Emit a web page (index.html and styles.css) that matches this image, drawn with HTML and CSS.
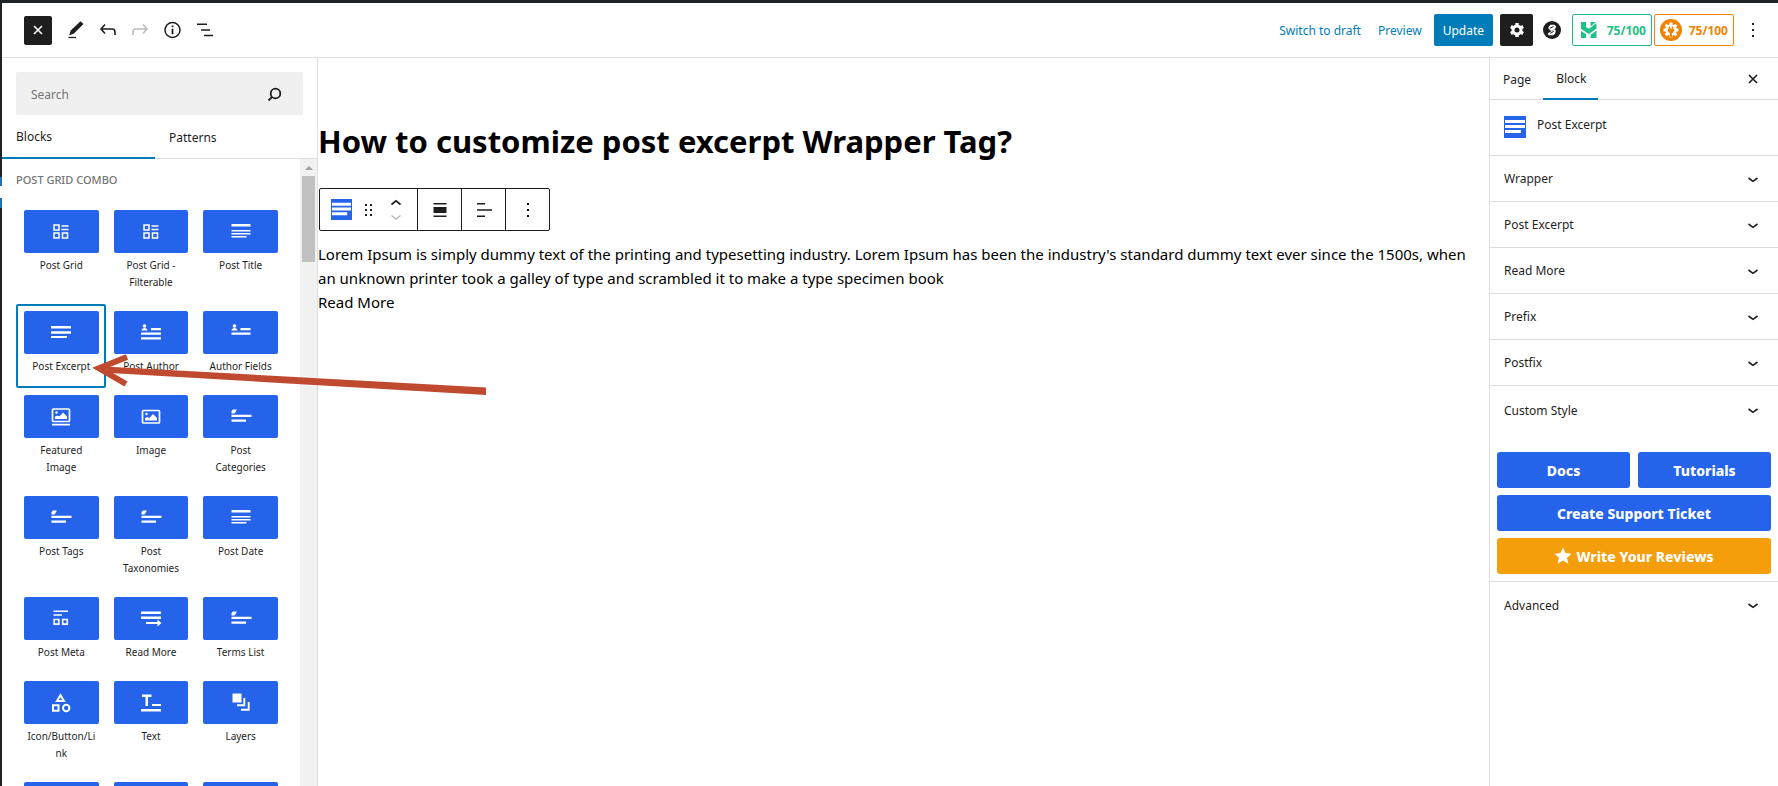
FILE: index.html
```html
<!DOCTYPE html>
<html lang="en">
<head>
<meta charset="utf-8">
<title>Edit Page</title>
<link rel="stylesheet" href="styles.css">
</head>
<body>
<svg class="sprite" aria-hidden="true">
  <symbol id="chevron" viewBox="0 0 24 24"><path d="M7.500 11 12 14.300l4.500-3.300" fill="none" stroke="currentColor" stroke-width="1.600"/></symbol>
  <symbol id="close" viewBox="0 0 24 24"><path d="M8 8l8 8M16 8l-8 8" fill="none" stroke="currentColor" stroke-width="1.600"/></symbol>
  <symbol id="dots" viewBox="0 0 24 24"><path d="M11 5h2v2h-2zM11 11h2v2h-2zM11 17h2v2h-2z" fill="currentColor"/></symbol>
  <symbol id="excerpt" viewBox="0 0 22 22"><path fill="#2563eb" d="M0 0h22v22H0z"/><path fill="#fff" d="M1 4h20v3H1zM1 9h20v3H1zM1 14h16v3H1z"/></symbol>
  <symbol id="t-grid" viewBox="0 0 24 24"><path d="M5 5h5v5H5zM5 13h5v5H5zM13.500 13h5v5h-5z" fill="none" stroke="#fff" stroke-width="1.500"/><path d="M12.500 6h7M12.500 9.500h7" stroke="#fff" stroke-width="1.300"/></symbol>
  <symbol id="t-title" viewBox="0 0 24 24"><path fill="#fff" d="M2.500 4h19v2.500h-19zM2.500 10h19v1.500h-19zM2.500 13h19v1.500h-19zM2.500 16h15v1.500h-15z"/></symbol>
  <symbol id="t-excerpt" viewBox="0 0 24 24"><path fill="#fff" d="M2 5h20v2.500H2zM2 10.200h20v2.500H2zM2 15h16v2H2z"/></symbol>
  <symbol id="t-author" viewBox="0 0 24 24"><circle cx="5.500" cy="5" r="1.800" fill="#fff"/><path fill="#fff" d="M2.500 9.500c0-3.500 6-3.500 6 0zM12 7h10v2.200H12zM2 11.500h20v2.300H2zM2 16.200h20v2.300H2z"/></symbol>
  <symbol id="t-fields" viewBox="0 0 24 24"><circle cx="5.500" cy="5" r="1.800" fill="#fff"/><path fill="#fff" d="M2.500 9.500c0-3.500 6-3.500 6 0zM11.500 7h10v2.200h-10zM2.500 11.500h19v2.300h-19z"/></symbol>
  <symbol id="t-featured" viewBox="0 0 24 24"><rect x="3.500" y="4" width="17" height="12.500" rx="1" fill="none" stroke="#fff" stroke-width="1.700"/><circle cx="7.500" cy="7.500" r="1.200" fill="#fff"/><path fill="#fff" d="M6 14v-2.500l2.500-1 2 1L14 7.500l4 4V14zM3 18.800h18v1.700H3z"/></symbol>
  <symbol id="t-image" viewBox="0 0 24 24"><rect x="3.500" y="5.500" width="17" height="12.500" rx="1" fill="none" stroke="#fff" stroke-width="1.700"/><circle cx="7.500" cy="9" r="1.200" fill="#fff"/><path fill="#fff" d="M6 15.500V13l2.500-1 2 1L14 9l4 4v2.500z"/></symbol>
  <symbol id="t-terms" viewBox="0 0 24 24"><path fill="#fff" d="M2.500 8.500V6L4 4.500h4L6.500 7l-1 1.500zM2.500 9.800h20V12h-20zM2.500 14.500H17v2.300H2.500z"/></symbol>
  <symbol id="t-meta" viewBox="0 0 24 24"><path fill="#fff" d="M4.500 3.500H19V5H4.500zM4.500 7.300H13v1.500H4.500z"/><path d="M5.200 12.500h4.600v4.600H5.200zM13.700 12.500h4.600v4.600h-4.600z" fill="none" stroke="#fff" stroke-width="1.600"/></symbol>
  <symbol id="t-more" viewBox="0 0 24 24"><path fill="#fff" d="M2 4.500h20V7H2zM2 9.500h20V12H2zM7 15h11.500v-2.500L22.500 16l-4 3.500V17H7z"/></symbol>
  <symbol id="t-shapes" viewBox="0 0 24 24"><path d="M11.500 4.200 15 10H8zM4 14.200h5.500v5.500H4z" fill="none" stroke="#fff" stroke-width="2"/><circle cx="17.200" cy="17" r="3.200" fill="none" stroke="#fff" stroke-width="2"/></symbol>
  <symbol id="t-text" viewBox="0 0 24 24"><path fill="#fff" d="M3 3.500h9.500V6H9v9H6.500V6H3zM13 13h9v2h-9zM2 18h20v2.500H2z"/></symbol>
  <symbol id="t-layers" viewBox="0 0 24 24"><path fill="#fff" d="M3.500 2.500h9v9h-9z"/><path d="M15.300 7v7.300H8M19.700 11v7.700H12" fill="none" stroke="#fff" stroke-width="1.900"/></symbol>
</svg>

<div class="editor">
  <header class="topbar">
    <div class="tools">
      <button class="inserter-toggle" aria-label="Toggle block inserter"><svg class="i24"><use href="#close"/></svg></button>
      <button class="tool" aria-label="Tools"><svg class="i24" viewBox="0 0 24 24"><path d="M16.500 3.300 19.500 6 10 15.500l-4.800 2 1.500-5z" fill="#1e1e1e"/><path d="M4.500 19.500h7.500" stroke="#1e1e1e" stroke-width="1.300"/></svg></button>
      <button class="tool" aria-label="Undo"><svg class="i24" viewBox="0 0 24 24"><path d="M9 6.500 5 11l4 4.500M5 11h11q3 0 3 3v3" fill="none" stroke="#1e1e1e" stroke-width="1.600"/></svg></button>
      <button class="tool" aria-label="Redo" disabled><svg class="i24" viewBox="0 0 24 24"><path d="M15 6.500l4 4.500-4 4.500M19 11H8q-3 0-3 3v3" fill="none" stroke="#bbb" stroke-width="1.600"/></svg></button>
      <button class="tool" aria-label="Details"><svg class="i24" viewBox="0 0 24 24"><circle cx="12.500" cy="12" r="7.500" fill="none" stroke="#1e1e1e" stroke-width="1.500"/><path d="M11.600 7.500h1.800v1.800h-1.800zM11.600 10.800h1.800v5.500h-1.800z" fill="#1e1e1e"/></svg></button>
      <button class="tool" aria-label="List view"><svg class="i24" viewBox="0 0 24 24"><path d="M5 6.300h10M9 12h9M12 17.500h9" stroke="#1e1e1e" stroke-width="1.600"/></svg></button>
    </div>
    <div class="actions">
      <button class="link">Switch to draft</button>
      <button class="link">Preview</button>
      <button class="update">Update</button>
      <button class="settings" aria-label="Settings"><svg class="i24" viewBox="0 0 24 24"><circle cx="12" cy="12" r="4" fill="none" stroke="#fff" stroke-width="3"/><path d="M12 5v2.500M12 16.500V19M5.900 8.500l2.200 1.200M15.900 14.300l2.200 1.200M5.900 15.500l2.200-1.200M15.900 9.700l2.200-1.200" stroke="#fff" stroke-width="3.400"/></svg></button>
      <button class="tool" aria-label="Blocks settings"><svg class="i24" viewBox="0 0 24 24"><circle cx="12" cy="12" r="9" fill="#1e1e1e"/><path d="M8.500 10.500V9l2-2.200h3.800l1.800 1.400-.6 2.300-4.500 2.500zM7.700 15.500l6.800-4.200 1.300 1.200-.6 3-2 1.700H8.500z" fill="#fff"/><path d="M10 10.200 13.500 8.500M10.300 15.300l3.500-2" stroke="#1e1e1e" stroke-width="1"/></svg></button>
      <div class="scores">
        <button class="score score-green"><svg class="i24" viewBox="0 0 24 24"><path d="M4 4h5v5l3 1.700L19.500 5v5.500L12 16l-8-5zM13.500 4H19l-5.500 4.500zM4 13l5 3v4H4zM13.500 17l6-4.500V20h-6z" fill="#1fc184"/></svg>75/100</button>
        <button class="score score-orange"><svg class="i24" viewBox="0 0 24 24"><circle cx="12" cy="12" r="11" fill="#f08300"/><circle cx="12" cy="12" r="5.800" fill="#fff"/><path d="M12 4.500v15M4.500 12h15M6.700 6.700l10.600 10.600M17.300 6.700 6.700 17.300" stroke="#fff" stroke-width="3"/><path d="M10.500 8.500v3M13.500 8.500v3" stroke="#f08300" stroke-width="1.400"/><path d="M8.800 10.800h6.400v2.500l-2.200 2V19h-2v-3.700l-2.200-2z" fill="#f08300"/></svg>75/100</button>
      </div>
      <button class="tool" aria-label="Options"><svg class="i24"><use href="#dots"/></svg></button>
    </div>
  </header>

  <div class="workspace">
    <aside class="inserter">
      <label class="search"><input type="text" placeholder="Search" aria-label="Search blocks"><svg class="i24" viewBox="0 0 24 24"><circle cx="12.500" cy="10.500" r="4.800" fill="none" stroke="#1e1e1e" stroke-width="1.800"/><path d="M9 14l-3.500 3.500" stroke="#1e1e1e" stroke-width="1.800"/></svg></label>
      <div class="inserter-tabs"><button class="active">Blocks</button><button>Patterns</button></div>
      <div class="library">
        <div class="library-list">
          <h2>POST GRID COMBO</h2>
          <div class="blocks">
            <button class="block"><span class="tile"><svg class="i24"><use href="#t-grid"/></svg></span><span class="name">Post Grid</span></button>
            <button class="block"><span class="tile"><svg class="i24"><use href="#t-grid"/></svg></span><span class="name">Post Grid - Filterable</span></button>
            <button class="block"><span class="tile"><svg class="i24"><use href="#t-title"/></svg></span><span class="name">Post Title</span></button>
            <button class="block selected"><span class="tile"><svg class="i24"><use href="#t-excerpt"/></svg></span><span class="name">Post Excerpt</span></button>
            <button class="block"><span class="tile"><svg class="i24"><use href="#t-author"/></svg></span><span class="name">Post Author</span></button>
            <button class="block"><span class="tile"><svg class="i24"><use href="#t-fields"/></svg></span><span class="name">Author Fields</span></button>
            <button class="block"><span class="tile"><svg class="i24"><use href="#t-featured"/></svg></span><span class="name">Featured Image</span></button>
            <button class="block"><span class="tile"><svg class="i24"><use href="#t-image"/></svg></span><span class="name">Image</span></button>
            <button class="block"><span class="tile"><svg class="i24"><use href="#t-terms"/></svg></span><span class="name">Post Categories</span></button>
            <button class="block"><span class="tile"><svg class="i24"><use href="#t-terms"/></svg></span><span class="name">Post Tags</span></button>
            <button class="block"><span class="tile"><svg class="i24"><use href="#t-terms"/></svg></span><span class="name">Post Taxonomies</span></button>
            <button class="block"><span class="tile"><svg class="i24"><use href="#t-title"/></svg></span><span class="name">Post Date</span></button>
            <button class="block"><span class="tile"><svg class="i24"><use href="#t-meta"/></svg></span><span class="name">Post Meta</span></button>
            <button class="block"><span class="tile"><svg class="i24"><use href="#t-more"/></svg></span><span class="name">Read More</span></button>
            <button class="block"><span class="tile"><svg class="i24"><use href="#t-terms"/></svg></span><span class="name">Terms List</span></button>
            <button class="block"><span class="tile"><svg class="i24"><use href="#t-shapes"/></svg></span><span class="name">Icon/Button/Li<wbr>nk</span></button>
            <button class="block"><span class="tile"><svg class="i24"><use href="#t-text"/></svg></span><span class="name">Text</span></button>
            <button class="block"><span class="tile"><svg class="i24"><use href="#t-layers"/></svg></span><span class="name">Layers</span></button>
            <button class="block" aria-label="Block"><span class="tile"></span></button>
            <button class="block" aria-label="Block"><span class="tile"></span></button>
            <button class="block" aria-label="Block"><span class="tile"></span></button>
          </div>
        </div>
        <div class="scrollbar"><span class="scroll-up"></span><span class="thumb"></span></div>
      </div>
    </aside>

    <main class="canvas">
      <h1>How to customize post excerpt Wrapper Tag?</h1>
      <div class="block-toolbar">
        <div class="group">
          <button aria-label="Post Excerpt"><svg class="i21"><use href="#excerpt"/></svg></button>
          <button aria-label="Drag"><svg class="i24" viewBox="0 0 24 24"><path d="M9 6h2v2H9zM14 6h2v2h-2zM9 11h2v2H9zM14 11h2v2h-2zM9 16h2v2H9zM14 16h2v2h-2z" fill="#1e1e1e"/></svg></button>
          <button aria-label="Move"><svg class="i24" viewBox="0 0 24 24"><path d="M7.500 6.500 12 2.800l4.500 3.700" fill="none" stroke="#1e1e1e" stroke-width="1.700"/><path d="M7.500 17.500 12 21l4.500-3.500" fill="none" stroke="#bbb" stroke-width="1.500"/></svg></button>
        </div>
        <div class="group"><button aria-label="Align"><svg class="i24" viewBox="0 0 24 24"><path d="M5.500 5.700h13M5.500 18.300h13" stroke="#1e1e1e" stroke-width="1.500"/><path d="M5.500 9h13v6h-13z" fill="#1e1e1e"/></svg></button></div>
        <div class="group"><button aria-label="Align text"><svg class="i24" viewBox="0 0 24 24"><path d="M5 5.700h8M5 12h15M5 18.300h8" stroke="#1e1e1e" stroke-width="1.500"/></svg></button></div>
        <div class="group"><button aria-label="Options"><svg class="i24"><use href="#dots"/></svg></button></div>
      </div>
      <p>Lorem Ipsum is simply dummy text of the printing and typesetting industry. Lorem Ipsum has been the industry's standard dummy text ever since the 1500s, when an unknown printer took a galley of type and scrambled it to make a type specimen book</p>
      <p>Read More</p>
    </main>

    <aside class="inspector">
      <div class="inspector-tabs"><button>Page</button><button class="active">Block</button><button class="close" aria-label="Close settings"><svg class="i24"><use href="#close"/></svg></button></div>
      <div class="card"><svg class="i22"><use href="#excerpt"/></svg><span>Post Excerpt</span></div>
      <button class="panel">Wrapper<svg class="i24"><use href="#chevron"/></svg></button>
      <button class="panel">Post Excerpt<svg class="i24"><use href="#chevron"/></svg></button>
      <button class="panel">Read More<svg class="i24"><use href="#chevron"/></svg></button>
      <button class="panel">Prefix<svg class="i24"><use href="#chevron"/></svg></button>
      <button class="panel">Postfix<svg class="i24"><use href="#chevron"/></svg></button>
      <button class="panel last">Custom Style<svg class="i24"><use href="#chevron"/></svg></button>
      <div class="help">
        <a href="#docs">Docs</a><a href="#tutorials">Tutorials</a>
        <a class="wide" href="#support">Create Support Ticket</a>
        <a class="wide review" href="#reviews"><svg class="i18" viewBox="0 0 18 18"><path fill="#fff" d="M9 .5l2.500 5.600 6 .6-4.500 4 1.400 6L9 13.600l-5.400 3.100 1.400-6-4.500-4 6-.6z"/></svg>Write Your Reviews</a>
      </div>
      <button class="panel advanced">Advanced<svg class="i24"><use href="#chevron"/></svg></button>
    </aside>
  </div>
</div>
<svg class="arrow" viewBox="0 0 400 50" aria-hidden="true"><path d="M14 16.500 396 37.500v7.500L20 23z" fill="#bf4a30"/><path d="M37 7 9 18.300 36 34" fill="none" stroke="#bf4a30" stroke-width="6"/></svg>
</body>
</html>
```
FILE: styles.css
```css
* { box-sizing: border-box; }
body {
  margin: 0;
  font-family: "Noto Sans", "Open Sans", sans-serif;
  font-size: 12px;
  color: #1e1e1e;
  background: #fff;
}
button {
  font: inherit;
  color: inherit;
  background: none;
  border: 0;
  padding: 0;
  margin: 0;
}
svg { display: block; flex: none; }
.sprite { position: absolute; width: 0; height: 0; }
.i18 { width: 18px; height: 18px; }
.i21 { width: 21px; height: 21px; }
.i22 { width: 22px; height: 22px; }
.i24 { width: 24px; height: 24px; }

.editor {
  height: 100vh;
  display: flex;
  flex-direction: column;
  overflow: hidden;
  border-top: 3px solid #1d2327;
  border-left: 2px solid;
  border-image: linear-gradient(#1d2327 177px, #2271b1 177px, #2271b1 186px, #fff 186px, #fff 198px, #2271b1 198px, #2271b1 208px, #1d2327 208px) 3 0 0 2;
}
.topbar {
  flex: none;
  height: 55px;
  display: flex;
  justify-content: space-between;
  align-items: center;
  padding: 0 13px 0 22px;
  border-bottom: 1px solid #e0e0e0;
}
.tools, .actions { display: flex; align-items: center; }
.tools { gap: 8px; }
.inserter-toggle {
  width: 28px;
  height: 29px;
  margin-right: 4px;
  display: grid;
  place-items: center;
  background: #1e1e1e;
  color: #fff;
  border-radius: 2px;
}
.tool { display: block; }
.link { color: #007cba; margin-right: 17px; }
.update {
  height: 32px;
  padding: 0 9px;
  margin: 0 7px 0 -5px;
  background: #007cba;
  color: #fff;
  border-radius: 2px;
}
.settings {
  width: 33px;
  height: 32px;
  margin-right: 7px;
  display: grid;
  place-items: center;
  background: #1e1e1e;
  border-radius: 2px;
}
.scores { display: flex; gap: 2px; margin: 0 7px 0 8px; }
.score {
  height: 32px;
  display: flex;
  align-items: center;
  justify-content: space-between;
  width: 80px;
  padding: 0 5px 0 4px;
  font-weight: 700;
  border: 1px solid;
  border-radius: 2px;
}
.score-green { color: #1fc184; }
.score-orange { color: #f08300; }

.workspace {
  flex: 1;
  min-height: 0;
  display: grid;
  grid-template-columns: 316px minmax(0, 1fr) 289px;
}
.inserter {
  min-height: 0;
  display: flex;
  flex-direction: column;
  border-right: 1px solid #e0e0e0;
}
.search {
  flex: none;
  display: flex;
  align-items: center;
  height: 43px;
  margin: 14px 14px 0;
  padding: 2px 16px 0 15px;
  background: #f0f0f0;
  border-radius: 2px;
}
.search input {
  flex: 1;
  min-width: 0;
  font: inherit;
  border: 0;
  padding: 0;
  background: none;
  outline: none;
}
.search input::placeholder { color: #757575; }
.inserter-tabs {
  flex: none;
  display: flex;
  height: 44px;
  border-bottom: 1px solid #ddd;
}
.inserter-tabs button {
  width: 153px;
  padding: 0 14px;
  height: 44px;
  text-align: left;
}
.inserter-tabs .active { border-bottom: 2px solid #007cba; }
.library { flex: 1; min-height: 0; display: flex; overflow: hidden; }
.library-list { flex: 1; padding: 0 15px 0 14px; }
.library h2 {
  margin: 0;
  padding: 13px 0 15px;
  font-size: 11px;
  line-height: 16px;
  font-weight: 500;
  color: #757575;
}
.blocks { display: grid; grid-template-columns: repeat(3, 1fr); }
.block {
  display: flex;
  flex-direction: column;
  justify-content: flex-start;
  gap: 4px;
  padding: 7px 7px 13px 8px;
  font-size: 10px;
  line-height: 17px;
  text-align: center;
}
.block.selected { box-shadow: inset 0 0 0 2px #007cba; border-radius: 2px; }
.block > span { align-self: stretch; }
.name { padding: 0 3px; }
.tile {
  height: 43px;
  display: grid;
  place-items: center;
  background: #2563eb;
  border-radius: 2px;
}
.scrollbar {
  width: 17px;
  display: flex;
  flex-direction: column;
  align-items: center;
  background: #f1f1f1;
}
.scroll-up {
  margin: 7px 0 6px;
  border: 4px solid transparent;
  border-top: 0;
  border-bottom-color: #a3a3a3;
}
.thumb { width: 13px; height: 86px; background: #c1c1c1; }

.canvas { padding: 58px 8px 0 0; color: #000; }
.canvas h1 {
  margin: 0 0 22px;
  font-size: 31px;
  line-height: 50px;
  font-weight: 700;
}
.block-toolbar {
  display: inline-flex;
  height: 43px;
  margin: 0 0 11px 1px;
  border: 1px solid #1e1e1e;
  border-radius: 2px;
}
.group { display: flex; align-items: center; justify-content: center; width: 44px; }
.group:first-child { width: 97px; gap: 4px; padding-left: 11px; justify-content: flex-start; }
.group + .group { border-left: 1px solid #1e1e1e; }
.canvas p { margin: 0; font-size: 15px; line-height: 24px; }

.inspector { border-left: 1px solid #e0e0e0; }
.inspector-tabs {
  display: flex;
  height: 42px;
  border-bottom: 1px solid #ddd;
}
.inspector-tabs button { padding: 0 12px 0 13px; height: 42px; }
.inspector-tabs .active { border-bottom: 2px solid #007cba; }
.inspector-tabs .close { margin-left: auto; padding: 0 13px; }
.card {
  display: flex;
  gap: 11px;
  height: 56px;
  padding: 16px 14px;
  line-height: 18px;
  border-bottom: 1px solid #ddd;
}
.panel {
  display: flex;
  width: 100%;
  height: 46px;
  justify-content: space-between;
  align-items: center;
  padding: 0 13px 0 14px;
  border-bottom: 1px solid #ddd;
}
.panel.last { height: 66px; padding-bottom: 18px; border: 0; }
.help {
  display: grid;
  grid-template-columns: 1fr 1fr;
  gap: 7px 8px;
  padding: 0 7px 7px;
  border-bottom: 1px solid #ddd;
}
.help a {
  display: flex;
  align-items: center;
  justify-content: center;
  gap: 4px;
  height: 36px;
  font-size: 14px;
  font-weight: 800;
  color: #fff;
  text-decoration: none;
  background: #2563eb;
  border-radius: 3px;
}
.help .wide { grid-column: 1 / -1; }
.help .review { background: #f59e0b; }
.panel.advanced { border: 0; }

/* Callout pointing at the selected block */
.arrow {
  position: absolute;
  left: 90px;
  top: 350px;
  width: 400px;
  height: 50px;
  pointer-events: none;
}
```
